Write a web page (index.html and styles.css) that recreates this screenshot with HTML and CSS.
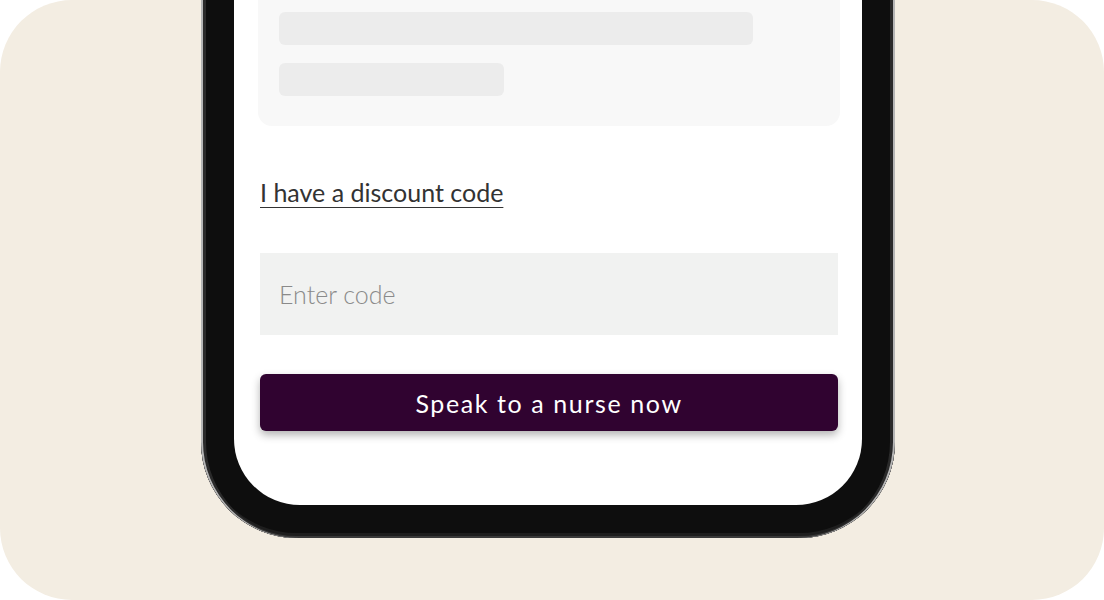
FILE: index.html
```html
<!DOCTYPE html>
<html lang="en">
<head>
    <meta charset="UTF-8">
    <meta name="viewport" content="width=device-width, initial-scale=1.0">
    <title>Discount Code</title>
    <link rel="stylesheet" href="styles.css">
</head>
<body>

<div class="stage">
    <div class="phone">
        <div class="screen">
            <div class="summary-card">
                <div class="skeleton skeleton-long"></div>
                <div class="skeleton skeleton-short"></div>
            </div>

            <a href="#" class="discount-link">I have a discount code</a>

            <input type="text" class="code-input" placeholder="Enter code">

            <button type="button" class="btn">Speak to a nurse now</button>
        </div>
    </div>
</div>

</body>
</html>
```

FILE: styles.css
```css
body {
    margin: 0;
    background: #ffffff;
    font-family: Lato, "Noto Sans", sans-serif;
}

.stage {
    width: 1104px;
    height: 600px;
    background-color: #f3ede2;
    border-radius: 72px;
    overflow: hidden;
}

.phone {
    width: 628px;
    height: 505px;
    margin-left: 201px;
    padding: 0 33px 33px;
    background-color: #0e0e0e;
    border-radius: 0 0 96px 96px;
    box-shadow:
        inset 2px 0 0 #b5b5b5,
        inset -2px 0 0 #b5b5b5,
        inset 0 -2px 0 #3a3a3a,
        inset 5px 0 0 #2a2a2a,
        inset -5px 0 0 #2a2a2a,
        inset 0 -5px 0 #1e1e1e;
}

.screen {
    height: 100%;
    box-sizing: border-box;
    padding: 0 22px 0 24px;
    background-color: #ffffff;
    border-radius: 0 0 66px 66px;
    display: flex;
    flex-direction: column;
    align-items: flex-start;
}

.summary-card {
    align-self: stretch;
    padding: 12px 21px 30px;
    background-color: #f8f8f8;
    border-radius: 0 0 14px 14px;
    display: flex;
    flex-direction: column;
    gap: 18px;
}

.skeleton {
    height: 33px;
    background-color: #ececec;
    border-radius: 6px;
}

.skeleton-long {
    width: 474px;
}

.skeleton-short {
    width: 225px;
}

.discount-link {
    margin: 50px 0 0 2px;
    font-size: 25px;
    line-height: 32px;
    color: #333333;
    text-decoration: underline;
    text-underline-offset: 5px;
    text-decoration-thickness: 1px;
}

.code-input {
    align-self: stretch;
    margin: 45px 2px 0 2px;
    height: 82px;
    padding: 0 19px;
    border: none;
    background-color: #f1f2f1;
    font-family: inherit;
    font-size: 25px;
    font-weight: 300;
    color: #333333;
    outline: none;
}

.code-input::placeholder {
    color: #8a8a8a;
}

.btn {
    align-self: stretch;
    margin: 39px 2px 0 2px;
    height: 57px;
    background-color: #300330;
    color: #ffffff;
    border: none;
    border-radius: 6px;
    font-family: inherit;
    font-size: 25px;
    letter-spacing: 1.6px;
    box-shadow: 0 4px 8px rgba(0, 0, 0, 0.3);
    cursor: pointer;
}
```
